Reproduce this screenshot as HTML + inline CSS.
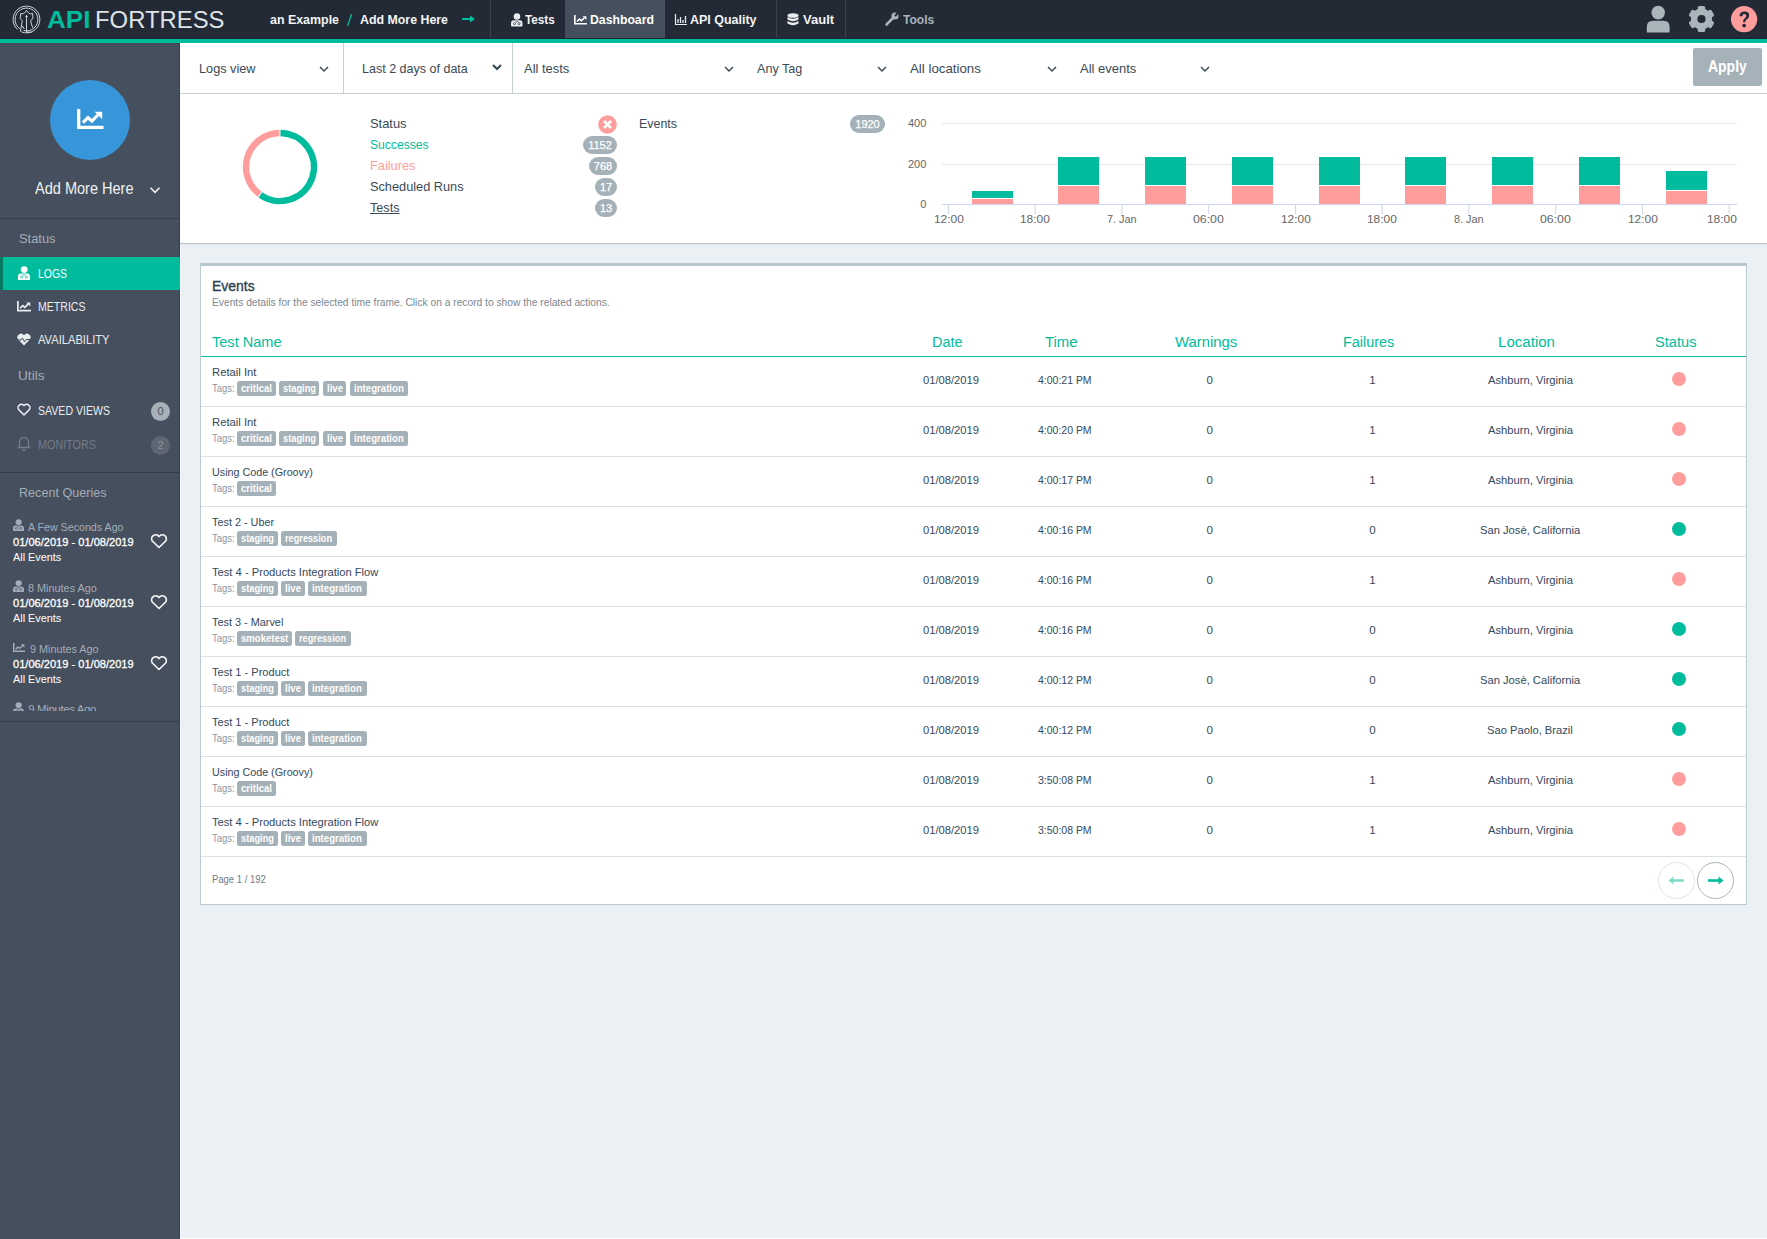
<!DOCTYPE html>
<html><head><meta charset="utf-8"><style>
html,body{margin:0;padding:0;width:1767px;height:1239px;overflow:hidden;background:#ebf0f4}
body{position:relative;font-family:"Liberation Sans",sans-serif}
.t{position:absolute;white-space:nowrap;line-height:1}
.b{position:absolute;box-sizing:content-box}
svg.b{overflow:visible}
</style></head><body>
<div class="b" style="left:0;top:0;width:1767px;height:1239px;background:#ebf0f4"></div>
<div class="b" style="left:180px;top:244px;width:1px;height:995px;background:#f7fbfd;"></div>
<div class="b" style="left:180px;top:1238px;width:1587px;height:1px;background:#ffffff;"></div>
<div class="b" style="left:0px;top:0px;width:1767px;height:38px;background:#242a35;"></div>
<div class="b" style="left:0px;top:38px;width:1767px;height:1px;background:#1f232c;"></div>
<div class="b" style="left:0px;top:39px;width:1767px;height:4px;background:#00bc9c;"></div>
<svg class="b" style="left:10px;top:3px;" width="34" height="34" viewBox="0 0 34 34"><path d="M7.53 26.46 A13.4 13.4 0 1 1 11.48 28.92" fill="none" stroke="#dfe4e8" stroke-width="0.9"/><path d="M9.96 25.84 A11.4 11.4 0 1 1 13.55 27.51" fill="none" stroke="#dfe4e8" stroke-width="0.9"/><path d="M10.4 28.8 L11.5 22 L12.3 17.6 L10.2 15.4 L10.7 10.4 L12.3 11 L14.5 9.9 L16.5 7.4 L18.4 9.9 L20.6 11 L22.5 10.4 L23 15.4 L20.6 17.6 L21.7 22 L23 24.7" fill="none" stroke="#dfe4e8" stroke-width="0.9" stroke-linejoin="round"/><path d="M16.5 12.5 V29.2 H21.5" fill="none" stroke="#dfe4e8" stroke-width="0.9"/><path d="M15.2 14 L16.5 11.8 L17.8 14 Z" fill="#dfe4e8"/><path d="M12.3 22.8 L14.3 26" stroke="#dfe4e8" stroke-width="1"/></svg>
<div class="t" style="left:47.00px;top:8.00px;font-size:24px;color:#00bc9c;font-weight:bold;transform:scaleX(1.0848);transform-origin:0 0;">API</div>
<div class="t" style="left:94.70px;top:8.00px;font-size:24px;color:#dfe3e7;transform:scaleX(0.9943);transform-origin:0 0;">FORTRESS</div>
<div class="t" style="left:270.20px;top:13.00px;font-size:13px;color:#f2f4f6;font-weight:bold;transform:scaleX(0.9550);transform-origin:0 0;">an Example</div>
<svg class="b" style="left:346px;top:13px;" width="7" height="14" viewBox="0 0 7 14"><path d="M1.6 13 L5.6 1" stroke="#00bc9c" stroke-width="1.3"/></svg>
<div class="t" style="left:360.00px;top:13.00px;font-size:13px;color:#f2f4f6;font-weight:bold;transform:scaleX(0.9518);transform-origin:0 0;">Add More Here</div>
<svg class="b" style="left:461px;top:14px;" width="16" height="10" viewBox="0 0 16 10"><path d="M1 5 H11" stroke="#00bc9c" stroke-width="2"/><path d="M9 1.5 L14 5 L9 8.5 Z" fill="#00bc9c"/></svg>
<div class="b" style="left:490px;top:0px;width:1px;height:38px;background:#3b4350;"></div>
<div class="b" style="left:565px;top:0px;width:100px;height:38px;background:#464f5d;"></div>
<div class="b" style="left:776px;top:0px;width:1px;height:38px;background:#3b4350;"></div>
<div class="b" style="left:845px;top:0px;width:1px;height:38px;background:#3b4350;"></div>
<svg class="b" style="left:510.6px;top:12.5px;" width="11.5" height="13.5" viewBox="0 0 11.5 13.5"><g transform="scale(0.9583,0.9643)"><circle cx="6.2" cy="3.6" r="3.4" fill="#e9edf0"/><path d="M0 13.2 V11 Q0 7.6 3 7.6 H9 Q12 7.6 12 11 V13.2 Q12 14 11.2 14 H0.8 Q0 14 0 13.2 Z" fill="#e9edf0"/><circle cx="3.6" cy="11" r="1.1" fill="none" stroke="#242a35" stroke-width="0.7"/><circle cx="8.4" cy="11" r="1.1" fill="none" stroke="#242a35" stroke-width="0.7"/><path d="M4.6 8 L6 9.6 L7.4 8" fill="none" stroke="#242a35" stroke-width="0.7"/></g></svg>
<div class="t" style="left:525.30px;top:13.00px;font-size:13.5px;color:#f2f4f6;font-weight:bold;transform:scaleX(0.8669);transform-origin:0 0;">Tests</div>
<svg class="b" style="left:574px;top:15px;" width="13" height="9.5" viewBox="0 0 13 9.5"><g transform="scale(0.8125,0.7917)"><path d="M0 0 H2 V10 H16 V12 H0 Z" fill="#ffffff"/><path d="M3.6 8.2 L6.6 5.2 L9 7.2 L12.6 3.6" fill="none" stroke="#ffffff" stroke-width="1.9" stroke-linejoin="miter"/><path d="M10.6 1.6 H15.2 V6.2 Z" fill="#ffffff"/></g></svg>
<div class="t" style="left:590.40px;top:13.00px;font-size:13.5px;color:#ffffff;font-weight:bold;transform:scaleX(0.9063);transform-origin:0 0;">Dashboard</div>
<svg class="b" style="left:674.7px;top:14px;" width="12" height="11" viewBox="0 0 12 11"><path d="M0.5 0 V10.5 H12" fill="none" stroke="#e9edf0" stroke-width="1.2"/><path d="M3 9 V5 M5.5 9 V3 M8 9 V6 M10.5 9 V2" stroke="#e9edf0" stroke-width="1.3"/></svg>
<div class="t" style="left:690.00px;top:13.00px;font-size:13.5px;color:#f2f4f6;font-weight:bold;transform:scaleX(0.9235);transform-origin:0 0;">API Quality</div>
<svg class="b" style="left:787px;top:13px;" width="12" height="13" viewBox="0 0 12 13"><ellipse cx="6" cy="2.5" rx="5.5" ry="2.3" fill="#e9edf0"/><path d="M0.5 4 Q6 7.5 11.5 4 V6.5 Q6 10 0.5 6.5 Z" fill="#e9edf0"/><path d="M0.5 8 Q6 11.5 11.5 8 V10.5 Q6 14 0.5 10.5 Z" fill="#e9edf0"/></svg>
<div class="t" style="left:803.10px;top:13.00px;font-size:13.5px;color:#f2f4f6;font-weight:bold;transform:scaleX(0.9672);transform-origin:0 0;">Vault</div>
<svg class="b" style="left:885px;top:12px;" width="14" height="14" viewBox="0 0 14 14"><path d="M1.5 12.5 L8 6" stroke="#a9b4bb" stroke-width="2.6" stroke-linecap="round"/><circle cx="10" cy="4" r="3.6" fill="#a9b4bb"/><path d="M10 4 L13.5 0.5" stroke="#242a35" stroke-width="2.2"/></svg>
<div class="t" style="left:903.00px;top:13.00px;font-size:13.5px;color:#a9b4bb;font-weight:bold;transform:scaleX(0.8916);transform-origin:0 0;">Tools</div>
<svg class="b" style="left:1646px;top:5px;" width="25" height="28" viewBox="0 0 25 28"><circle cx="12.2" cy="7.6" r="6.8" fill="#a9b4bb"/><path d="M0.8 27.4 V22 Q0.8 15.8 7 15.8 H17.4 Q23.6 15.8 23.6 22 V27.4 Q23.6 27.6 23 27.6 H1.4 Q0.8 27.6 0.8 27.4 Z" fill="#a9b4bb"/></svg>
<svg class="b" style="left:1688px;top:5px;" width="27" height="28" viewBox="0 0 27 28"><g transform="translate(13.5,14)"><circle r="10.6" fill="#a9b4bb"/><rect x="-3.7" y="-13" width="7.4" height="6" rx="1.6" fill="#a9b4bb" transform="rotate(0)"/><rect x="-3.7" y="-13" width="7.4" height="6" rx="1.6" fill="#a9b4bb" transform="rotate(60)"/><rect x="-3.7" y="-13" width="7.4" height="6" rx="1.6" fill="#a9b4bb" transform="rotate(120)"/><rect x="-3.7" y="-13" width="7.4" height="6" rx="1.6" fill="#a9b4bb" transform="rotate(180)"/><rect x="-3.7" y="-13" width="7.4" height="6" rx="1.6" fill="#a9b4bb" transform="rotate(240)"/><rect x="-3.7" y="-13" width="7.4" height="6" rx="1.6" fill="#a9b4bb" transform="rotate(300)"/><circle r="4.1" fill="#242a35"/></g></svg>
<svg class="b" style="left:1731px;top:6px;" width="27" height="27" viewBox="0 0 27 27"><circle cx="13.1" cy="13.2" r="13.1" fill="#ff9d9d"/><path d="M8.6 10.2 Q8.6 5.6 13.4 5.6 Q18.2 5.6 18.2 9.6 Q18.2 12 15.6 13.4 Q14.3 14.1 14.3 16.2 H12 Q12 13.2 14 12 Q15.4 11.2 15.4 9.8 Q15.4 8.1 13.3 8.1 Q11.4 8.1 11.4 10.2 Z" fill="#242a35"/><circle cx="13.15" cy="19.6" r="1.9" fill="#242a35"/></svg>
<div class="b" style="left:0px;top:43px;width:179px;height:1196px;background:#464f5d;"></div>
<div class="b" style="left:179px;top:43px;width:1px;height:1196px;background:#383f4b;"></div>
<div class="b" style="left:50px;top:80px;width:80px;height:80px;border-radius:50%;background:#3796d9"></div>
<svg class="b" style="left:77px;top:109px;" width="26.5" height="20" viewBox="0 0 26.5 20"><g transform="scale(1.6562,1.6667)"><path d="M0 0 H2 V10 H16 V12 H0 Z" fill="#ffffff"/><path d="M3.6 8.2 L6.6 5.2 L9 7.2 L12.6 3.6" fill="none" stroke="#ffffff" stroke-width="1.9" stroke-linejoin="miter"/><path d="M10.6 1.6 H15.2 V6.2 Z" fill="#ffffff"/></g></svg>
<div class="t" style="left:34.70px;top:181.00px;font-size:16px;color:#f0f2f4;transform:scaleX(0.9080);transform-origin:0 0;">Add More Here</div>
<svg class="b" style="left:148.5px;top:184.5px;" width="12" height="10" viewBox="0 0 12 10"><polyline points="1.5,2.75 6,7.25 10.5,2.75" fill="none" stroke="#f0f2f4" stroke-width="1.6"/></svg>
<div class="b" style="left:0px;top:218px;width:179px;height:1px;background:#363d48;"></div>
<div class="t" style="left:18.50px;top:232.00px;font-size:13px;color:#a3adb8;transform:scaleX(0.9904);transform-origin:0 0;">Status</div>
<div class="b" style="left:0px;top:257px;width:180px;height:33px;background:#00bc9c;"></div>
<div class="b" style="left:0px;top:257px;width:3px;height:33px;background:#047a63;"></div>
<svg class="b" style="left:18px;top:266px;" width="12" height="14" viewBox="0 0 12 14"><g transform="scale(1.0000,1.0000)"><circle cx="6.2" cy="3.6" r="3.4" fill="#ffffff"/><path d="M0 13.2 V11 Q0 7.6 3 7.6 H9 Q12 7.6 12 11 V13.2 Q12 14 11.2 14 H0.8 Q0 14 0 13.2 Z" fill="#ffffff"/><circle cx="3.6" cy="11" r="1.1" fill="none" stroke="#00bc9c" stroke-width="0.7"/><circle cx="8.4" cy="11" r="1.1" fill="none" stroke="#00bc9c" stroke-width="0.7"/><path d="M4.6 8 L6 9.6 L7.4 8" fill="none" stroke="#00bc9c" stroke-width="0.7"/></g></svg>
<div class="t" style="left:38.10px;top:268.00px;font-size:12.5px;color:#ffffff;transform:scaleX(0.8378);transform-origin:0 0;font-weight:500;">LOGS</div>
<svg class="b" style="left:17px;top:301px;" width="14" height="10.5" viewBox="0 0 14 10.5"><g transform="scale(0.8750,0.8750)"><path d="M0 0 H2 V10 H16 V12 H0 Z" fill="#e9edf0"/><path d="M3.6 8.2 L6.6 5.2 L9 7.2 L12.6 3.6" fill="none" stroke="#e9edf0" stroke-width="1.9" stroke-linejoin="miter"/><path d="M10.6 1.6 H15.2 V6.2 Z" fill="#e9edf0"/></g></svg>
<div class="t" style="left:38.00px;top:301.00px;font-size:12.5px;color:#e9edf0;transform:scaleX(0.8444);transform-origin:0 0;">METRICS</div>
<svg class="b" style="left:17px;top:333px;" width="14" height="13" viewBox="0 0 14 13"><path d="M7 12.5 L1.2 6.5 A3.4 3.4 0 0 1 7 2.2 A3.4 3.4 0 0 1 12.8 6.5 Z" fill="#e9edf0"/><path d="M0.5 7 H4 L5.5 5 L7.5 9 L9 6.5 H13.5" fill="none" stroke="#464f5d" stroke-width="1"/></svg>
<div class="t" style="left:37.50px;top:334.00px;font-size:12.5px;color:#e9edf0;transform:scaleX(0.8923);transform-origin:0 0;">AVAILABILITY</div>
<div class="t" style="left:18.40px;top:369.00px;font-size:13px;color:#a3adb8;transform:scaleX(1.0484);transform-origin:0 0;">Utils</div>
<svg class="b" style="left:17px;top:403px;" width="14" height="13" viewBox="0 0 14 13"><path d="M7 12 L1.8 6.8 A3.2 3.2 0 0 1 7 2.6 A3.2 3.2 0 0 1 12.2 6.8 Z" fill="none" stroke="#e9edf0" stroke-width="1.6" stroke-linejoin="round"/></svg>
<div class="t" style="left:38.00px;top:405.00px;font-size:12.5px;color:#e9edf0;transform:scaleX(0.8450);transform-origin:0 0;">SAVED VIEWS</div>
<div class="b" style="left:151px;top:402px;width:19px;height:19px;border-radius:50%;background:#a5b1b8"></div>
<div class="t" style="left:157.44px;top:406.00px;font-size:11px;color:#464f5d;">0</div>
<svg class="b" style="left:18px;top:436px;" width="12" height="15" viewBox="0 0 12 15"><path d="M6 1.5 A4.5 4.5 0 0 1 10.5 6 V10 L11.5 11.5 H0.5 L1.5 10 V6 A4.5 4.5 0 0 1 6 1.5 Z" fill="none" stroke="#737c87" stroke-width="1.3"/><path d="M4.5 13 A1.5 1.5 0 0 0 7.5 13" fill="none" stroke="#737c87" stroke-width="1.3"/></svg>
<div class="t" style="left:38.00px;top:439.00px;font-size:12.5px;color:#737c87;transform:scaleX(0.8640);transform-origin:0 0;">MONITORS</div>
<div class="b" style="left:151px;top:436px;width:19px;height:19px;border-radius:50%;background:#5d6672"></div>
<div class="t" style="left:157.44px;top:440.00px;font-size:11px;color:#8a939d;">2</div>
<div class="b" style="left:0px;top:472px;width:179px;height:1px;background:#363d48;"></div>
<div class="t" style="left:18.50px;top:486.00px;font-size:13px;color:#a3adb8;transform:scaleX(0.9688);transform-origin:0 0;">Recent Queries</div>
<svg class="b" style="left:12.6px;top:519.4px;" width="11" height="12" viewBox="0 0 11 12"><g transform="scale(0.9167,0.8571)"><circle cx="6.2" cy="3.6" r="3.4" fill="#a3adb8"/><path d="M0 13.2 V11 Q0 7.6 3 7.6 H9 Q12 7.6 12 11 V13.2 Q12 14 11.2 14 H0.8 Q0 14 0 13.2 Z" fill="#a3adb8"/><circle cx="3.6" cy="11" r="1.1" fill="none" stroke="#464f5d" stroke-width="0.7"/><circle cx="8.4" cy="11" r="1.1" fill="none" stroke="#464f5d" stroke-width="0.7"/><path d="M4.6 8 L6 9.6 L7.4 8" fill="none" stroke="#464f5d" stroke-width="0.7"/></g></svg>
<div class="t" style="left:28.30px;top:522.00px;font-size:11.5px;color:#a3adb8;transform:scaleX(0.9278);transform-origin:0 0;">A Few Seconds Ago</div>
<div class="t" style="left:13.00px;top:537.00px;font-size:11.5px;color:#ffffff;transform:scaleX(0.9629);transform-origin:0 0;-webkit-text-stroke:0.3px #fff;">01/06/2019 - 01/08/2019</div>
<div class="t" style="left:13.00px;top:552.00px;font-size:11.5px;color:#ffffff;transform:scaleX(0.9440);transform-origin:0 0;">All Events</div>
<svg class="b" style="left:150px;top:533.9px;" width="18" height="15" viewBox="0 0 18 15"><path d="M9 13.5 L2.3 7 A3.9 3.9 0 0 1 9 2.6 A3.9 3.9 0 0 1 15.7 7 Z" fill="none" stroke="#f0f2f4" stroke-width="1.7" stroke-linejoin="round"/></svg>
<svg class="b" style="left:12.6px;top:580.2px;" width="11" height="12" viewBox="0 0 11 12"><g transform="scale(0.9167,0.8571)"><circle cx="6.2" cy="3.6" r="3.4" fill="#a3adb8"/><path d="M0 13.2 V11 Q0 7.6 3 7.6 H9 Q12 7.6 12 11 V13.2 Q12 14 11.2 14 H0.8 Q0 14 0 13.2 Z" fill="#a3adb8"/><circle cx="3.6" cy="11" r="1.1" fill="none" stroke="#464f5d" stroke-width="0.7"/><circle cx="8.4" cy="11" r="1.1" fill="none" stroke="#464f5d" stroke-width="0.7"/><path d="M4.6 8 L6 9.6 L7.4 8" fill="none" stroke="#464f5d" stroke-width="0.7"/></g></svg>
<div class="t" style="left:28.30px;top:583.00px;font-size:11.5px;color:#a3adb8;transform:scaleX(0.9446);transform-origin:0 0;">8 Minutes Ago</div>
<div class="t" style="left:13.00px;top:598.00px;font-size:11.5px;color:#ffffff;transform:scaleX(0.9629);transform-origin:0 0;-webkit-text-stroke:0.3px #fff;">01/06/2019 - 01/08/2019</div>
<div class="t" style="left:13.00px;top:613.00px;font-size:11.5px;color:#ffffff;transform:scaleX(0.9440);transform-origin:0 0;">All Events</div>
<svg class="b" style="left:150px;top:594.7px;" width="18" height="15" viewBox="0 0 18 15"><path d="M9 13.5 L2.3 7 A3.9 3.9 0 0 1 9 2.6 A3.9 3.9 0 0 1 15.7 7 Z" fill="none" stroke="#f0f2f4" stroke-width="1.7" stroke-linejoin="round"/></svg>
<svg class="b" style="left:12.5px;top:642.6px;" width="12" height="9" viewBox="0 0 12 9"><g transform="scale(0.7500,0.7500)"><path d="M0 0 H2 V10 H16 V12 H0 Z" fill="#a3adb8"/><path d="M3.6 8.2 L6.6 5.2 L9 7.2 L12.6 3.6" fill="none" stroke="#a3adb8" stroke-width="1.9" stroke-linejoin="miter"/><path d="M10.6 1.6 H15.2 V6.2 Z" fill="#a3adb8"/></g></svg>
<div class="t" style="left:29.50px;top:644.00px;font-size:11.5px;color:#a3adb8;transform:scaleX(0.9417);transform-origin:0 0;">9 Minutes Ago</div>
<div class="t" style="left:13.00px;top:659.00px;font-size:11.5px;color:#ffffff;transform:scaleX(0.9629);transform-origin:0 0;-webkit-text-stroke:0.3px #fff;">01/06/2019 - 01/08/2019</div>
<div class="t" style="left:13.00px;top:674.00px;font-size:11.5px;color:#ffffff;transform:scaleX(0.9440);transform-origin:0 0;">All Events</div>
<svg class="b" style="left:150px;top:655.6px;" width="18" height="15" viewBox="0 0 18 15"><path d="M9 13.5 L2.3 7 A3.9 3.9 0 0 1 9 2.6 A3.9 3.9 0 0 1 15.7 7 Z" fill="none" stroke="#f0f2f4" stroke-width="1.7" stroke-linejoin="round"/></svg>
<div class="b" style="left:0;top:700px;width:179px;height:11px;overflow:hidden">
<svg style="position:absolute;left:12.6px;top:2.2px" width="11" height="12" viewBox="0 0 11 12"><g transform="scale(0.9167,0.8571)"><circle cx="6.2" cy="3.6" r="3.4" fill="#a3adb8"/><path d="M0 13.2 V11 Q0 7.6 3 7.6 H9 Q12 7.6 12 11 V13.2 Q12 14 11.2 14 H0.8 Q0 14 0 13.2 Z" fill="#a3adb8"/><circle cx="3.6" cy="11" r="1.1" fill="none" stroke="#464f5d" stroke-width="0.7"/><circle cx="8.4" cy="11" r="1.1" fill="none" stroke="#464f5d" stroke-width="0.7"/><path d="M4.6 8 L6 9.6 L7.4 8" fill="none" stroke="#464f5d" stroke-width="0.7"/></g></svg>
<div class="t" style="left:28.3px;top:3.87px;font-size:11.5px;color:#a3adb8;letter-spacing:-0.4px">9 Minutes Ago</div>
</div>
<div class="b" style="left:0px;top:721px;width:179px;height:1px;background:#363d48;"></div>
<div class="b" style="left:180px;top:43px;width:1587px;height:50px;background:#ffffff;"></div>
<div class="b" style="left:180px;top:93px;width:1587px;height:1px;background:#c6d1d6;"></div>
<div class="b" style="left:343px;top:43px;width:1px;height:50px;background:#c6d1d6;"></div>
<div class="b" style="left:512px;top:43px;width:1px;height:50px;background:#c6d1d6;"></div>
<div class="t" style="left:199.40px;top:62.00px;font-size:13.5px;color:#3a4a57;transform:scaleX(0.9412);transform-origin:0 0;">Logs view</div>
<svg class="b" style="left:317.5px;top:63.5px;" width="12" height="10" viewBox="0 0 12 10"><polyline points="2.0,3.0 6,7.0 10.0,3.0" fill="none" stroke="#3a4a57" stroke-width="1.45"/></svg>
<div class="t" style="left:362.40px;top:62.00px;font-size:13.5px;color:#3a4a57;transform:scaleX(0.9275);transform-origin:0 0;">Last 2 days of data</div>
<svg class="b" style="left:491px;top:62.3px;" width="12" height="10" viewBox="0 0 12 10"><polyline points="2.0,3.0 6,7.0 10.0,3.0" fill="none" stroke="#3a4a57" stroke-width="2.2"/></svg>
<div class="t" style="left:524.40px;top:62.00px;font-size:13.5px;color:#3a4a57;transform:scaleX(0.9585);transform-origin:0 0;">All tests</div>
<svg class="b" style="left:723.3px;top:63.5px;" width="12" height="10" viewBox="0 0 12 10"><polyline points="2.0,3.0 6,7.0 10.0,3.0" fill="none" stroke="#3a4a57" stroke-width="1.45"/></svg>
<div class="t" style="left:757.30px;top:62.00px;font-size:13.5px;color:#3a4a57;transform:scaleX(0.9334);transform-origin:0 0;">Any Tag</div>
<svg class="b" style="left:876.1px;top:63.5px;" width="12" height="10" viewBox="0 0 12 10"><polyline points="2.0,3.0 6,7.0 10.0,3.0" fill="none" stroke="#3a4a57" stroke-width="1.45"/></svg>
<div class="t" style="left:910.10px;top:62.00px;font-size:13.5px;color:#3a4a57;transform:scaleX(0.9843);transform-origin:0 0;">All locations</div>
<svg class="b" style="left:1046px;top:63.5px;" width="12" height="10" viewBox="0 0 12 10"><polyline points="2.0,3.0 6,7.0 10.0,3.0" fill="none" stroke="#3a4a57" stroke-width="1.45"/></svg>
<div class="t" style="left:1080.00px;top:62.00px;font-size:13.5px;color:#3a4a57;transform:scaleX(0.9620);transform-origin:0 0;">All events</div>
<svg class="b" style="left:1199px;top:63.5px;" width="12" height="10" viewBox="0 0 12 10"><polyline points="2.0,3.0 6,7.0 10.0,3.0" fill="none" stroke="#3a4a57" stroke-width="1.45"/></svg>
<div class="b" style="left:1693px;top:48px;width:69px;height:38px;border-radius:2px;background:#a6b2b9"></div>
<div class="t" style="left:1707.80px;top:59.00px;font-size:16px;color:#ffffff;font-weight:bold;transform:scaleX(0.8730);transform-origin:0 0;">Apply</div>
<div class="b" style="left:180px;top:94px;width:1587px;height:149px;background:#ffffff;"></div>
<div class="b" style="left:180px;top:243px;width:1587px;height:1px;background:#b9c7cd;"></div>
<div class="b" style="left:180px;top:244px;width:1587px;height:1px;background:#e3e8eb;"></div>
<svg class="b" style="left:0;top:0" width="400" height="250" viewBox="0 0 400 250"><path d="M280.47 133.00 A34 34 0 1 1 260.40 194.78" fill="none" stroke="#00bc9c" stroke-width="6.4"/><path d="M259.63 194.22 A34 34 0 0 1 279.53 133.00" fill="none" stroke="#ff9d9d" stroke-width="6.4"/></svg>
<div class="t" style="left:369.80px;top:117.00px;font-size:13.5px;color:#3a4a57;transform:scaleX(0.9537);transform-origin:0 0;">Status</div>
<div class="t" style="left:369.80px;top:138.00px;font-size:13.5px;color:#00bc9c;transform:scaleX(0.8962);transform-origin:0 0;">Successes</div>
<div class="t" style="left:369.80px;top:159.00px;font-size:13.5px;color:#ff9d9d;transform:scaleX(0.9477);transform-origin:0 0;">Failures</div>
<div class="t" style="left:369.80px;top:180.00px;font-size:13.5px;color:#3a4a57;transform:scaleX(0.9438);transform-origin:0 0;">Scheduled Runs</div>
<div class="t" style="left:369.80px;top:201.00px;font-size:13.5px;color:#3a4a57;transform:scaleX(0.9363);transform-origin:0 0;text-decoration:underline;">Tests</div>
<svg class="b" style="left:598px;top:115px;" width="19" height="19" viewBox="0 0 19 19"><circle cx="9.5" cy="9.5" r="9.3" fill="#ff9d9d"/><path d="M6 6 L13 13 M13 6 L6 13" stroke="#fff" stroke-width="2.6"/></svg>
<div class="b" style="left:583px;top:136px;width:34px;height:18px;border-radius:9px;background:#a5b1b8"></div>
<div class="t" style="left:588.17px;top:140.00px;font-size:11px;color:#ffffff;-webkit-text-stroke:0.25px #fff;">1152</div>
<div class="b" style="left:589px;top:157px;width:28px;height:18px;border-radius:9px;background:#a5b1b8"></div>
<div class="t" style="left:593.82px;top:161.00px;font-size:11px;color:#ffffff;-webkit-text-stroke:0.25px #fff;">768</div>
<div class="b" style="left:595px;top:178px;width:22px;height:18px;border-radius:9px;background:#a5b1b8"></div>
<div class="t" style="left:599.88px;top:182.00px;font-size:11px;color:#ffffff;-webkit-text-stroke:0.25px #fff;">17</div>
<div class="b" style="left:595px;top:199px;width:22px;height:18px;border-radius:9px;background:#a5b1b8"></div>
<div class="t" style="left:599.88px;top:203.00px;font-size:11px;color:#ffffff;-webkit-text-stroke:0.25px #fff;">13</div>
<div class="t" style="left:638.80px;top:117.00px;font-size:13.5px;color:#3a4a57;transform:scaleX(0.9208);transform-origin:0 0;">Events</div>
<div class="b" style="left:850px;top:115px;width:35px;height:18px;border-radius:9px;background:#a5b1b8"></div>
<div class="t" style="left:855.27px;top:119.00px;font-size:11px;color:#ffffff;-webkit-text-stroke:0.25px #fff;">1920</div>
<svg class="b" style="left:0;top:0" width="1767" height="250" viewBox="0 0 1767 250"><line x1="942" y1="123.5" x2="1737" y2="123.5" stroke="#e3e7ec" stroke-width="1"/><line x1="942" y1="164.5" x2="1737" y2="164.5" stroke="#e3e7ec" stroke-width="1"/><line x1="942" y1="204.5" x2="1737" y2="204.5" stroke="#ccd6eb" stroke-width="1"/><line x1="948.4" y1="204" x2="948.4" y2="214" stroke="#ccd6eb" stroke-width="1"/><line x1="1035.2" y1="204" x2="1035.2" y2="214" stroke="#ccd6eb" stroke-width="1"/><line x1="1121.9" y1="204" x2="1121.9" y2="214" stroke="#ccd6eb" stroke-width="1"/><line x1="1208.7" y1="204" x2="1208.7" y2="214" stroke="#ccd6eb" stroke-width="1"/><line x1="1295.4" y1="204" x2="1295.4" y2="214" stroke="#ccd6eb" stroke-width="1"/><line x1="1382.2" y1="204" x2="1382.2" y2="214" stroke="#ccd6eb" stroke-width="1"/><line x1="1468.9" y1="204" x2="1468.9" y2="214" stroke="#ccd6eb" stroke-width="1"/><line x1="1555.7" y1="204" x2="1555.7" y2="214" stroke="#ccd6eb" stroke-width="1"/><line x1="1642.4" y1="204" x2="1642.4" y2="214" stroke="#ccd6eb" stroke-width="1"/><line x1="1729.2" y1="204" x2="1729.2" y2="214" stroke="#ccd6eb" stroke-width="1"/><rect x="972.0" y="191" width="41" height="7" fill="#00bc9c"/><rect x="972.0" y="199" width="41" height="5" fill="#ff9d9d"/><rect x="1058.0" y="157" width="41" height="28" fill="#00bc9c"/><rect x="1058.0" y="186" width="41" height="18" fill="#ff9d9d"/><rect x="1145.0" y="157" width="41" height="28" fill="#00bc9c"/><rect x="1145.0" y="186" width="41" height="18" fill="#ff9d9d"/><rect x="1232.0" y="157" width="41" height="28" fill="#00bc9c"/><rect x="1232.0" y="186" width="41" height="18" fill="#ff9d9d"/><rect x="1319.0" y="157" width="41" height="28" fill="#00bc9c"/><rect x="1319.0" y="186" width="41" height="18" fill="#ff9d9d"/><rect x="1405.0" y="157" width="41" height="28" fill="#00bc9c"/><rect x="1405.0" y="186" width="41" height="18" fill="#ff9d9d"/><rect x="1492.0" y="157" width="41" height="28" fill="#00bc9c"/><rect x="1492.0" y="186" width="41" height="18" fill="#ff9d9d"/><rect x="1579.0" y="157" width="41" height="28" fill="#00bc9c"/><rect x="1579.0" y="186" width="41" height="18" fill="#ff9d9d"/><rect x="1666.0" y="171" width="41" height="19" fill="#00bc9c"/><rect x="1666.0" y="191" width="41" height="13" fill="#ff9d9d"/></svg>
<div class="t" style="left:907.95px;top:118.00px;font-size:11px;color:#666666;">400</div>
<div class="t" style="left:907.95px;top:159.00px;font-size:11px;color:#666666;">200</div>
<div class="t" style="left:920.18px;top:199.00px;font-size:11px;color:#666666;">0</div>
<div class="t" style="left:933.50px;top:214.00px;font-size:11px;color:#666666;transform:scaleX(1.0827);transform-origin:0 0;">12:00</div>
<div class="t" style="left:1020.25px;top:214.00px;font-size:11px;color:#666666;transform:scaleX(1.0827);transform-origin:0 0;">18:00</div>
<div class="t" style="left:1107.10px;top:214.00px;font-size:11px;color:#666666;transform:scaleX(0.9879);transform-origin:0 0;">7. Jan</div>
<div class="t" style="left:1193.25px;top:214.00px;font-size:11px;color:#666666;transform:scaleX(1.1190);transform-origin:0 0;">06:00</div>
<div class="t" style="left:1280.50px;top:214.00px;font-size:11px;color:#666666;transform:scaleX(1.0827);transform-origin:0 0;">12:00</div>
<div class="t" style="left:1367.25px;top:214.00px;font-size:11px;color:#666666;transform:scaleX(1.0827);transform-origin:0 0;">18:00</div>
<div class="t" style="left:1454.10px;top:214.00px;font-size:11px;color:#666666;transform:scaleX(0.9879);transform-origin:0 0;">8. Jan</div>
<div class="t" style="left:1540.25px;top:214.00px;font-size:11px;color:#666666;transform:scaleX(1.1190);transform-origin:0 0;">06:00</div>
<div class="t" style="left:1627.50px;top:214.00px;font-size:11px;color:#666666;transform:scaleX(1.0827);transform-origin:0 0;">12:00</div>
<div class="t" style="left:1706.70px;top:214.00px;font-size:11px;color:#666666;transform:scaleX(1.0827);transform-origin:0 0;">18:00</div>
<div class="b" style="left:200px;top:263px;width:1545px;height:638px;background:#fff;border:1px solid #bccbd1;border-top:3px solid #b8c8cf"></div>
<div class="t" style="left:211.50px;top:279.00px;font-size:14.5px;color:#2c3e50;transform:scaleX(0.9610);transform-origin:0 0;-webkit-text-stroke:0.35px #2c3e50;">Events</div>
<div class="t" style="left:211.50px;top:297.00px;font-size:10.5px;color:#7b8791;transform:scaleX(0.9749);transform-origin:0 0;">Events details for the selected time frame. Click on a record to show the related actions.</div>
<div class="t" style="left:211.70px;top:334.00px;font-size:15.5px;color:#00bc9c;transform:scaleX(0.9382);transform-origin:0 0;">Test Name</div>
<div class="t" style="left:932.20px;top:334.00px;font-size:15.5px;color:#00bc9c;transform:scaleX(0.9347);transform-origin:0 0;">Date</div>
<div class="t" style="left:1045.45px;top:334.00px;font-size:15.5px;color:#00bc9c;transform:scaleX(0.9596);transform-origin:0 0;">Time</div>
<div class="t" style="left:1174.95px;top:334.00px;font-size:15.5px;color:#00bc9c;transform:scaleX(0.9570);transform-origin:0 0;">Warnings</div>
<div class="t" style="left:1343.35px;top:334.00px;font-size:15.5px;color:#00bc9c;transform:scaleX(0.9306);transform-origin:0 0;">Failures</div>
<div class="t" style="left:1498.30px;top:334.00px;font-size:15.5px;color:#00bc9c;transform:scaleX(0.9727);transform-origin:0 0;">Location</div>
<div class="t" style="left:1654.75px;top:334.00px;font-size:15.5px;color:#00bc9c;transform:scaleX(0.9445);transform-origin:0 0;">Status</div>
<div class="b" style="left:201px;top:356px;width:1545px;height:1px;background:#00bc9c;"></div>
<div class="t" style="left:211.50px;top:367.00px;font-size:11.5px;color:#34495e;transform:scaleX(0.9806);transform-origin:0 0;">Retail Int</div>
<div class="t" style="left:211.50px;top:383.00px;font-size:10.5px;color:#8a959e;transform:scaleX(0.9046);transform-origin:0 0;">Tags:</div>
<div class="b" style="left:237px;top:381px;width:38.5px;height:15px;border-radius:2.5px;background:#a5b1b8"></div>
<div class="t" style="left:240.75px;top:383.00px;font-size:10.5px;color:#ffffff;font-weight:bold;transform:scaleX(0.9158);transform-origin:0 0;">critical</div>
<div class="b" style="left:278.9px;top:381px;width:40.6px;height:15px;border-radius:2.5px;background:#a5b1b8"></div>
<div class="t" style="left:282.70px;top:383.00px;font-size:10.5px;color:#ffffff;font-weight:bold;transform:scaleX(0.8840);transform-origin:0 0;">staging</div>
<div class="b" style="left:322.9px;top:381px;width:23.6px;height:15px;border-radius:2.5px;background:#a5b1b8"></div>
<div class="t" style="left:326.70px;top:383.00px;font-size:10.5px;color:#ffffff;font-weight:bold;transform:scaleX(0.9137);transform-origin:0 0;">live</div>
<div class="b" style="left:349.9px;top:381px;width:58.6px;height:15px;border-radius:2.5px;background:#a5b1b8"></div>
<div class="t" style="left:354.30px;top:383.00px;font-size:10.5px;color:#ffffff;font-weight:bold;transform:scaleX(0.9181);transform-origin:0 0;">integration</div>
<div class="t" style="left:923.30px;top:375.00px;font-size:11.5px;color:#34495e;transform:scaleX(0.9731);transform-origin:0 0;">01/08/2019</div>
<div class="t" style="left:1038.40px;top:375.00px;font-size:11.5px;color:#34495e;transform:scaleX(0.9114);transform-origin:0 0;">4:00:21 PM</div>
<div class="t" style="left:1206.40px;top:375.00px;font-size:11.5px;color:#34495e;">0</div>
<div class="t" style="left:1369.20px;top:375.00px;font-size:11.5px;color:#34495e;">1</div>
<div class="t" style="left:1487.50px;top:375.00px;font-size:11.5px;color:#34495e;transform:scaleX(0.9730);transform-origin:0 0;">Ashburn, Virginia</div>
<div class="b" style="left:1672px;top:372px;width:14px;height:14px;border-radius:50%;background:#ff9d9d"></div>
<div class="b" style="left:201px;top:406px;width:1545px;height:1px;background:#dde1e4;"></div>
<div class="t" style="left:211.50px;top:417.00px;font-size:11.5px;color:#34495e;transform:scaleX(0.9806);transform-origin:0 0;">Retail Int</div>
<div class="t" style="left:211.50px;top:433.00px;font-size:10.5px;color:#8a959e;transform:scaleX(0.9046);transform-origin:0 0;">Tags:</div>
<div class="b" style="left:237px;top:431px;width:38.5px;height:15px;border-radius:2.5px;background:#a5b1b8"></div>
<div class="t" style="left:240.75px;top:433.00px;font-size:10.5px;color:#ffffff;font-weight:bold;transform:scaleX(0.9158);transform-origin:0 0;">critical</div>
<div class="b" style="left:278.9px;top:431px;width:40.6px;height:15px;border-radius:2.5px;background:#a5b1b8"></div>
<div class="t" style="left:282.70px;top:433.00px;font-size:10.5px;color:#ffffff;font-weight:bold;transform:scaleX(0.8840);transform-origin:0 0;">staging</div>
<div class="b" style="left:322.9px;top:431px;width:23.6px;height:15px;border-radius:2.5px;background:#a5b1b8"></div>
<div class="t" style="left:326.70px;top:433.00px;font-size:10.5px;color:#ffffff;font-weight:bold;transform:scaleX(0.9137);transform-origin:0 0;">live</div>
<div class="b" style="left:349.9px;top:431px;width:58.6px;height:15px;border-radius:2.5px;background:#a5b1b8"></div>
<div class="t" style="left:354.30px;top:433.00px;font-size:10.5px;color:#ffffff;font-weight:bold;transform:scaleX(0.9181);transform-origin:0 0;">integration</div>
<div class="t" style="left:923.30px;top:425.00px;font-size:11.5px;color:#34495e;transform:scaleX(0.9731);transform-origin:0 0;">01/08/2019</div>
<div class="t" style="left:1038.40px;top:425.00px;font-size:11.5px;color:#34495e;transform:scaleX(0.9114);transform-origin:0 0;">4:00:20 PM</div>
<div class="t" style="left:1206.40px;top:425.00px;font-size:11.5px;color:#34495e;">0</div>
<div class="t" style="left:1369.20px;top:425.00px;font-size:11.5px;color:#34495e;">1</div>
<div class="t" style="left:1487.50px;top:425.00px;font-size:11.5px;color:#34495e;transform:scaleX(0.9730);transform-origin:0 0;">Ashburn, Virginia</div>
<div class="b" style="left:1672px;top:422px;width:14px;height:14px;border-radius:50%;background:#ff9d9d"></div>
<div class="b" style="left:201px;top:456px;width:1545px;height:1px;background:#dde1e4;"></div>
<div class="t" style="left:211.50px;top:467.00px;font-size:11.5px;color:#34495e;transform:scaleX(0.9342);transform-origin:0 0;">Using Code (Groovy)</div>
<div class="t" style="left:211.50px;top:483.00px;font-size:10.5px;color:#8a959e;transform:scaleX(0.9046);transform-origin:0 0;">Tags:</div>
<div class="b" style="left:237px;top:481px;width:38.5px;height:15px;border-radius:2.5px;background:#a5b1b8"></div>
<div class="t" style="left:240.75px;top:483.00px;font-size:10.5px;color:#ffffff;font-weight:bold;transform:scaleX(0.9158);transform-origin:0 0;">critical</div>
<div class="t" style="left:923.30px;top:475.00px;font-size:11.5px;color:#34495e;transform:scaleX(0.9731);transform-origin:0 0;">01/08/2019</div>
<div class="t" style="left:1038.40px;top:475.00px;font-size:11.5px;color:#34495e;transform:scaleX(0.9114);transform-origin:0 0;">4:00:17 PM</div>
<div class="t" style="left:1206.40px;top:475.00px;font-size:11.5px;color:#34495e;">0</div>
<div class="t" style="left:1369.20px;top:475.00px;font-size:11.5px;color:#34495e;">1</div>
<div class="t" style="left:1487.50px;top:475.00px;font-size:11.5px;color:#34495e;transform:scaleX(0.9730);transform-origin:0 0;">Ashburn, Virginia</div>
<div class="b" style="left:1672px;top:472px;width:14px;height:14px;border-radius:50%;background:#ff9d9d"></div>
<div class="b" style="left:201px;top:506px;width:1545px;height:1px;background:#dde1e4;"></div>
<div class="t" style="left:211.50px;top:517.00px;font-size:11.5px;color:#34495e;transform:scaleX(0.9434);transform-origin:0 0;">Test 2 - Uber</div>
<div class="t" style="left:211.50px;top:533.00px;font-size:10.5px;color:#8a959e;transform:scaleX(0.9046);transform-origin:0 0;">Tags:</div>
<div class="b" style="left:237px;top:531px;width:40.6px;height:15px;border-radius:2.5px;background:#a5b1b8"></div>
<div class="t" style="left:240.80px;top:533.00px;font-size:10.5px;color:#ffffff;font-weight:bold;transform:scaleX(0.8840);transform-origin:0 0;">staging</div>
<div class="b" style="left:281.0px;top:531px;width:55.6px;height:15px;border-radius:2.5px;background:#a5b1b8"></div>
<div class="t" style="left:285.30px;top:533.00px;font-size:10.5px;color:#ffffff;font-weight:bold;transform:scaleX(0.8755);transform-origin:0 0;">regression</div>
<div class="t" style="left:923.30px;top:525.00px;font-size:11.5px;color:#34495e;transform:scaleX(0.9731);transform-origin:0 0;">01/08/2019</div>
<div class="t" style="left:1038.40px;top:525.00px;font-size:11.5px;color:#34495e;transform:scaleX(0.9114);transform-origin:0 0;">4:00:16 PM</div>
<div class="t" style="left:1206.40px;top:525.00px;font-size:11.5px;color:#34495e;">0</div>
<div class="t" style="left:1369.20px;top:525.00px;font-size:11.5px;color:#34495e;">0</div>
<div class="t" style="left:1479.94px;top:525.00px;font-size:11.5px;color:#34495e;transform:scaleX(0.9730);transform-origin:0 0;">San Josè, California</div>
<div class="b" style="left:1672px;top:522px;width:14px;height:14px;border-radius:50%;background:#00bc9c"></div>
<div class="b" style="left:201px;top:556px;width:1545px;height:1px;background:#dde1e4;"></div>
<div class="t" style="left:211.50px;top:567.00px;font-size:11.5px;color:#34495e;transform:scaleX(0.9709);transform-origin:0 0;">Test 4 - Products Integration Flow</div>
<div class="t" style="left:211.50px;top:583.00px;font-size:10.5px;color:#8a959e;transform:scaleX(0.9046);transform-origin:0 0;">Tags:</div>
<div class="b" style="left:237px;top:581px;width:40.6px;height:15px;border-radius:2.5px;background:#a5b1b8"></div>
<div class="t" style="left:240.80px;top:583.00px;font-size:10.5px;color:#ffffff;font-weight:bold;transform:scaleX(0.8840);transform-origin:0 0;">staging</div>
<div class="b" style="left:281.0px;top:581px;width:23.6px;height:15px;border-radius:2.5px;background:#a5b1b8"></div>
<div class="t" style="left:284.80px;top:583.00px;font-size:10.5px;color:#ffffff;font-weight:bold;transform:scaleX(0.9137);transform-origin:0 0;">live</div>
<div class="b" style="left:308.0px;top:581px;width:58.6px;height:15px;border-radius:2.5px;background:#a5b1b8"></div>
<div class="t" style="left:312.40px;top:583.00px;font-size:10.5px;color:#ffffff;font-weight:bold;transform:scaleX(0.9181);transform-origin:0 0;">integration</div>
<div class="t" style="left:923.30px;top:575.00px;font-size:11.5px;color:#34495e;transform:scaleX(0.9731);transform-origin:0 0;">01/08/2019</div>
<div class="t" style="left:1038.40px;top:575.00px;font-size:11.5px;color:#34495e;transform:scaleX(0.9114);transform-origin:0 0;">4:00:16 PM</div>
<div class="t" style="left:1206.40px;top:575.00px;font-size:11.5px;color:#34495e;">0</div>
<div class="t" style="left:1369.20px;top:575.00px;font-size:11.5px;color:#34495e;">1</div>
<div class="t" style="left:1487.50px;top:575.00px;font-size:11.5px;color:#34495e;transform:scaleX(0.9730);transform-origin:0 0;">Ashburn, Virginia</div>
<div class="b" style="left:1672px;top:572px;width:14px;height:14px;border-radius:50%;background:#ff9d9d"></div>
<div class="b" style="left:201px;top:606px;width:1545px;height:1px;background:#dde1e4;"></div>
<div class="t" style="left:211.50px;top:617.00px;font-size:11.5px;color:#34495e;transform:scaleX(0.9456);transform-origin:0 0;">Test 3 - Marvel</div>
<div class="t" style="left:211.50px;top:633.00px;font-size:10.5px;color:#8a959e;transform:scaleX(0.9046);transform-origin:0 0;">Tags:</div>
<div class="b" style="left:237px;top:631px;width:54.6px;height:15px;border-radius:2.5px;background:#a5b1b8"></div>
<div class="t" style="left:240.65px;top:633.00px;font-size:10.5px;color:#ffffff;font-weight:bold;transform:scaleX(0.9107);transform-origin:0 0;">smoketest</div>
<div class="b" style="left:295.0px;top:631px;width:55.6px;height:15px;border-radius:2.5px;background:#a5b1b8"></div>
<div class="t" style="left:299.30px;top:633.00px;font-size:10.5px;color:#ffffff;font-weight:bold;transform:scaleX(0.8755);transform-origin:0 0;">regression</div>
<div class="t" style="left:923.30px;top:625.00px;font-size:11.5px;color:#34495e;transform:scaleX(0.9731);transform-origin:0 0;">01/08/2019</div>
<div class="t" style="left:1038.40px;top:625.00px;font-size:11.5px;color:#34495e;transform:scaleX(0.9114);transform-origin:0 0;">4:00:16 PM</div>
<div class="t" style="left:1206.40px;top:625.00px;font-size:11.5px;color:#34495e;">0</div>
<div class="t" style="left:1369.20px;top:625.00px;font-size:11.5px;color:#34495e;">0</div>
<div class="t" style="left:1487.50px;top:625.00px;font-size:11.5px;color:#34495e;transform:scaleX(0.9730);transform-origin:0 0;">Ashburn, Virginia</div>
<div class="b" style="left:1672px;top:622px;width:14px;height:14px;border-radius:50%;background:#00bc9c"></div>
<div class="b" style="left:201px;top:656px;width:1545px;height:1px;background:#dde1e4;"></div>
<div class="t" style="left:211.50px;top:667.00px;font-size:11.5px;color:#34495e;transform:scaleX(0.9611);transform-origin:0 0;">Test 1 - Product</div>
<div class="t" style="left:211.50px;top:683.00px;font-size:10.5px;color:#8a959e;transform:scaleX(0.9046);transform-origin:0 0;">Tags:</div>
<div class="b" style="left:237px;top:681px;width:40.6px;height:15px;border-radius:2.5px;background:#a5b1b8"></div>
<div class="t" style="left:240.80px;top:683.00px;font-size:10.5px;color:#ffffff;font-weight:bold;transform:scaleX(0.8840);transform-origin:0 0;">staging</div>
<div class="b" style="left:281.0px;top:681px;width:23.6px;height:15px;border-radius:2.5px;background:#a5b1b8"></div>
<div class="t" style="left:284.80px;top:683.00px;font-size:10.5px;color:#ffffff;font-weight:bold;transform:scaleX(0.9137);transform-origin:0 0;">live</div>
<div class="b" style="left:308.0px;top:681px;width:58.6px;height:15px;border-radius:2.5px;background:#a5b1b8"></div>
<div class="t" style="left:312.40px;top:683.00px;font-size:10.5px;color:#ffffff;font-weight:bold;transform:scaleX(0.9181);transform-origin:0 0;">integration</div>
<div class="t" style="left:923.30px;top:675.00px;font-size:11.5px;color:#34495e;transform:scaleX(0.9731);transform-origin:0 0;">01/08/2019</div>
<div class="t" style="left:1038.40px;top:675.00px;font-size:11.5px;color:#34495e;transform:scaleX(0.9114);transform-origin:0 0;">4:00:12 PM</div>
<div class="t" style="left:1206.40px;top:675.00px;font-size:11.5px;color:#34495e;">0</div>
<div class="t" style="left:1369.20px;top:675.00px;font-size:11.5px;color:#34495e;">0</div>
<div class="t" style="left:1479.94px;top:675.00px;font-size:11.5px;color:#34495e;transform:scaleX(0.9730);transform-origin:0 0;">San Josè, California</div>
<div class="b" style="left:1672px;top:672px;width:14px;height:14px;border-radius:50%;background:#00bc9c"></div>
<div class="b" style="left:201px;top:706px;width:1545px;height:1px;background:#dde1e4;"></div>
<div class="t" style="left:211.50px;top:717.00px;font-size:11.5px;color:#34495e;transform:scaleX(0.9611);transform-origin:0 0;">Test 1 - Product</div>
<div class="t" style="left:211.50px;top:733.00px;font-size:10.5px;color:#8a959e;transform:scaleX(0.9046);transform-origin:0 0;">Tags:</div>
<div class="b" style="left:237px;top:731px;width:40.6px;height:15px;border-radius:2.5px;background:#a5b1b8"></div>
<div class="t" style="left:240.80px;top:733.00px;font-size:10.5px;color:#ffffff;font-weight:bold;transform:scaleX(0.8840);transform-origin:0 0;">staging</div>
<div class="b" style="left:281.0px;top:731px;width:23.6px;height:15px;border-radius:2.5px;background:#a5b1b8"></div>
<div class="t" style="left:284.80px;top:733.00px;font-size:10.5px;color:#ffffff;font-weight:bold;transform:scaleX(0.9137);transform-origin:0 0;">live</div>
<div class="b" style="left:308.0px;top:731px;width:58.6px;height:15px;border-radius:2.5px;background:#a5b1b8"></div>
<div class="t" style="left:312.40px;top:733.00px;font-size:10.5px;color:#ffffff;font-weight:bold;transform:scaleX(0.9181);transform-origin:0 0;">integration</div>
<div class="t" style="left:923.30px;top:725.00px;font-size:11.5px;color:#34495e;transform:scaleX(0.9731);transform-origin:0 0;">01/08/2019</div>
<div class="t" style="left:1038.40px;top:725.00px;font-size:11.5px;color:#34495e;transform:scaleX(0.9114);transform-origin:0 0;">4:00:12 PM</div>
<div class="t" style="left:1206.40px;top:725.00px;font-size:11.5px;color:#34495e;">0</div>
<div class="t" style="left:1369.20px;top:725.00px;font-size:11.5px;color:#34495e;">0</div>
<div class="t" style="left:1487.09px;top:725.00px;font-size:11.5px;color:#34495e;transform:scaleX(0.9730);transform-origin:0 0;">Sao Paolo, Brazil</div>
<div class="b" style="left:1672px;top:722px;width:14px;height:14px;border-radius:50%;background:#00bc9c"></div>
<div class="b" style="left:201px;top:756px;width:1545px;height:1px;background:#dde1e4;"></div>
<div class="t" style="left:211.50px;top:767.00px;font-size:11.5px;color:#34495e;transform:scaleX(0.9342);transform-origin:0 0;">Using Code (Groovy)</div>
<div class="t" style="left:211.50px;top:783.00px;font-size:10.5px;color:#8a959e;transform:scaleX(0.9046);transform-origin:0 0;">Tags:</div>
<div class="b" style="left:237px;top:781px;width:38.5px;height:15px;border-radius:2.5px;background:#a5b1b8"></div>
<div class="t" style="left:240.75px;top:783.00px;font-size:10.5px;color:#ffffff;font-weight:bold;transform:scaleX(0.9158);transform-origin:0 0;">critical</div>
<div class="t" style="left:923.30px;top:775.00px;font-size:11.5px;color:#34495e;transform:scaleX(0.9731);transform-origin:0 0;">01/08/2019</div>
<div class="t" style="left:1038.40px;top:775.00px;font-size:11.5px;color:#34495e;transform:scaleX(0.9114);transform-origin:0 0;">3:50:08 PM</div>
<div class="t" style="left:1206.40px;top:775.00px;font-size:11.5px;color:#34495e;">0</div>
<div class="t" style="left:1369.20px;top:775.00px;font-size:11.5px;color:#34495e;">1</div>
<div class="t" style="left:1487.50px;top:775.00px;font-size:11.5px;color:#34495e;transform:scaleX(0.9730);transform-origin:0 0;">Ashburn, Virginia</div>
<div class="b" style="left:1672px;top:772px;width:14px;height:14px;border-radius:50%;background:#ff9d9d"></div>
<div class="b" style="left:201px;top:806px;width:1545px;height:1px;background:#dde1e4;"></div>
<div class="t" style="left:211.50px;top:817.00px;font-size:11.5px;color:#34495e;transform:scaleX(0.9709);transform-origin:0 0;">Test 4 - Products Integration Flow</div>
<div class="t" style="left:211.50px;top:833.00px;font-size:10.5px;color:#8a959e;transform:scaleX(0.9046);transform-origin:0 0;">Tags:</div>
<div class="b" style="left:237px;top:831px;width:40.6px;height:15px;border-radius:2.5px;background:#a5b1b8"></div>
<div class="t" style="left:240.80px;top:833.00px;font-size:10.5px;color:#ffffff;font-weight:bold;transform:scaleX(0.8840);transform-origin:0 0;">staging</div>
<div class="b" style="left:281.0px;top:831px;width:23.6px;height:15px;border-radius:2.5px;background:#a5b1b8"></div>
<div class="t" style="left:284.80px;top:833.00px;font-size:10.5px;color:#ffffff;font-weight:bold;transform:scaleX(0.9137);transform-origin:0 0;">live</div>
<div class="b" style="left:308.0px;top:831px;width:58.6px;height:15px;border-radius:2.5px;background:#a5b1b8"></div>
<div class="t" style="left:312.40px;top:833.00px;font-size:10.5px;color:#ffffff;font-weight:bold;transform:scaleX(0.9181);transform-origin:0 0;">integration</div>
<div class="t" style="left:923.30px;top:825.00px;font-size:11.5px;color:#34495e;transform:scaleX(0.9731);transform-origin:0 0;">01/08/2019</div>
<div class="t" style="left:1038.40px;top:825.00px;font-size:11.5px;color:#34495e;transform:scaleX(0.9114);transform-origin:0 0;">3:50:08 PM</div>
<div class="t" style="left:1206.40px;top:825.00px;font-size:11.5px;color:#34495e;">0</div>
<div class="t" style="left:1369.20px;top:825.00px;font-size:11.5px;color:#34495e;">1</div>
<div class="t" style="left:1487.50px;top:825.00px;font-size:11.5px;color:#34495e;transform:scaleX(0.9730);transform-origin:0 0;">Ashburn, Virginia</div>
<div class="b" style="left:1672px;top:822px;width:14px;height:14px;border-radius:50%;background:#ff9d9d"></div>
<div class="b" style="left:201px;top:856px;width:1545px;height:1px;background:#dde1e4;"></div>
<div class="t" style="left:211.50px;top:874.00px;font-size:10.5px;color:#6e7a84;transform:scaleX(0.9015);transform-origin:0 0;">Page 1 / 192</div>
<div class="b" style="left:1658px;top:862px;width:35px;height:35px;border-radius:50%;border:1px solid #dde4e8"></div>
<div class="b" style="left:1697px;top:862px;width:35px;height:35px;border-radius:50%;border:1px solid #aab6bd"></div>
<svg class="b" style="left:1668px;top:876px;" width="17" height="9" viewBox="0 0 17 9"><path d="M16 4.5 H5" stroke="#80dcca" stroke-width="2.6"/><path d="M0.5 4.5 L5.5 0.5 V8.5 Z" fill="#80dcca"/></svg>
<svg class="b" style="left:1707px;top:876px;" width="17" height="9" viewBox="0 0 17 9"><path d="M1 4.5 H12" stroke="#00bc9c" stroke-width="2.6"/><path d="M16.5 4.5 L11.5 0.5 V8.5 Z" fill="#00bc9c"/></svg>
</body></html>
